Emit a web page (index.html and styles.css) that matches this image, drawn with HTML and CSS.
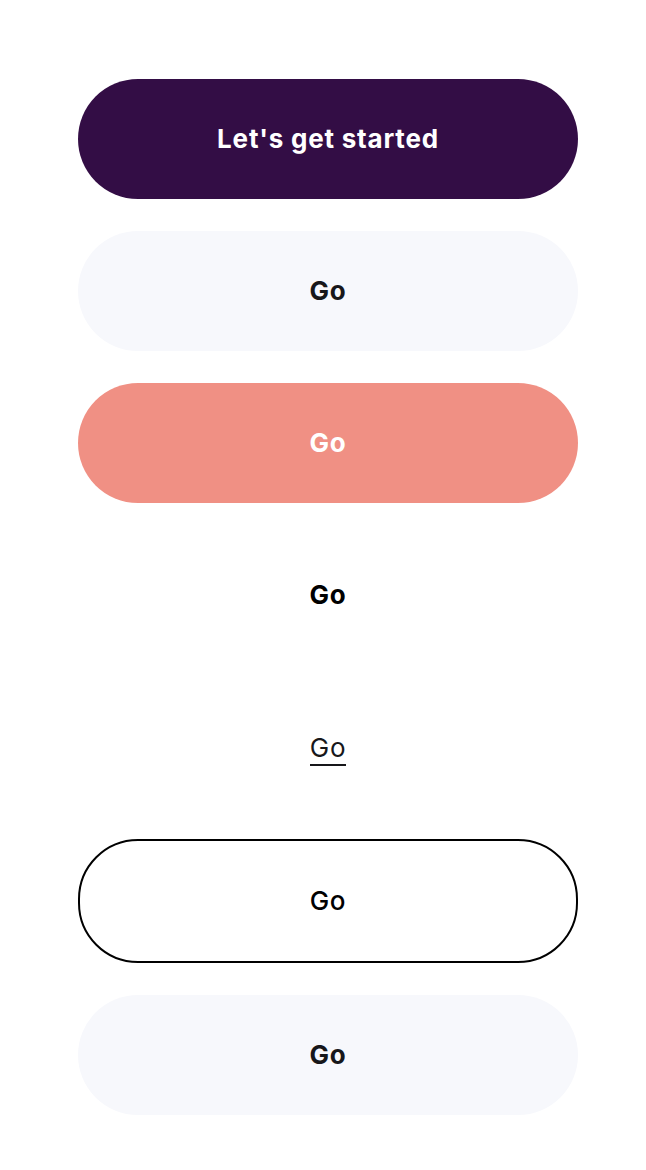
FILE: index.html
```html
<!DOCTYPE html>
<html lang="en">
<head>
<meta charset="utf-8">
<title>Buttons</title>
<link rel="stylesheet" href="styles.css">
</head>
<body>
<main class="stack">
  <button class="btn btn-primary">Let's get started</button>
  <button class="btn btn-secondary">Go</button>
  <button class="btn btn-coral">Go</button>
  <button class="btn btn-ghost">Go</button>
  <button class="btn btn-link"><span class="link-text">Go</span></button>
  <button class="btn btn-outline">Go</button>
  <button class="btn btn-secondary">Go</button>
</main>
</body>
</html>
```

FILE: styles.css
```css
* { box-sizing: border-box; }
html, body { margin: 0; padding: 0; background: #ffffff; }
body { font-family: Inter, "Liberation Sans", sans-serif; }
.stack {
  display: flex;
  flex-direction: column;
  gap: 32px;
  width: 500px;
  margin-left: 78px;
  padding-top: 79px;
}
.btn {
  display: flex;
  align-items: center;
  justify-content: center;
  height: 120px;
  width: 100%;
  border: none;
  border-radius: 60px;
  background: transparent;
  font-family: Inter, "Liberation Sans", sans-serif;
  font-size: 26px;
  font-weight: 700;
  color: #000;
  padding: 0 0 2px 0;
  margin: 0;
  letter-spacing: 0.8px;
}
.btn-primary { background: #330d45; color: #ffffff; }
.btn-secondary { background: #f7f8fc; color: #17171a; }
.btn-coral { background: #f09084; color: #ffffff; }
.btn-ghost { color: #000; }
.btn-link { font-weight: 400; color: #17171a; }
.link-text {
  display: inline-block;
  padding-bottom: 1px;
  border-bottom: 2px solid #17171a;
  line-height: 1.2;
  transform: translateY(3px);
}
.btn-outline {
  height: 124px;
  border: 2px solid #000;
  background: #fff;
  font-weight: 500;
  color: #000;
}
```
